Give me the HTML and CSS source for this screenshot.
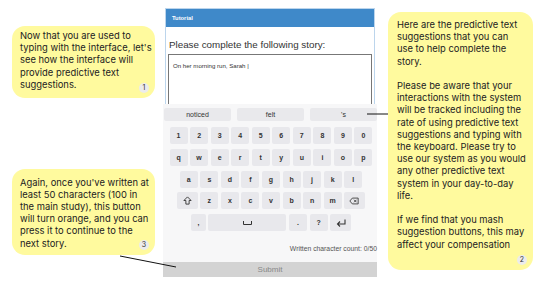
FILE: index.html
```html
<!DOCTYPE html>
<html>
<head>
  <meta charset="UTF-8">
  <title>Tutorial - predictive text</title>
  <link rel="stylesheet" href="styles.css">
</head>
<body>
  <div class="stage">
    <!-- Left column: callouts 1 and 3 -->
    <div class="side side-left">
      <div class="note note-1">
        Now that you are used to<br>
        typing with the interface, let's<br>
        see how the interface will<br>
        provide predictive text<br>
        suggestions.
        <span class="badge">1</span>
      </div>
      <div class="note note-3">
        Again, once you've written at<br>
        least 50 characters (100 in<br>
        the main study), this button<br>
        will turn orange, and you can<br>
        press it to continue to the<br>
        next story.
        <span class="badge">3</span>
      </div>
    </div>

    <!-- Middle column: the app -->
    <div class="app">
      <div class="panel">
        <div class="panel-head">Tutorial</div>
        <div class="panel-body">
          <div class="prompt">Please complete the following story:</div>
          <div class="story">On her morning run, Sarah |</div>
        </div>
      </div>
      <div class="keyboard">
        <div class="suggestions">
          <div class="suggestion">noticed</div>
          <div class="suggestion">felt</div>
          <div class="suggestion">'s</div>
        </div>
        <div class="key-row">
          <div class="key">1</div><div class="key">2</div><div class="key">3</div><div class="key">4</div><div class="key">5</div>
          <div class="key">6</div><div class="key">7</div><div class="key">8</div><div class="key">9</div><div class="key">0</div>
        </div>
        <div class="key-row">
          <div class="key">q</div><div class="key">w</div><div class="key">e</div><div class="key">r</div><div class="key">t</div>
          <div class="key">y</div><div class="key">u</div><div class="key">i</div><div class="key">o</div><div class="key">p</div>
        </div>
        <div class="key-row">
          <div class="key">a</div><div class="key">s</div><div class="key">d</div><div class="key">f</div><div class="key">g</div>
          <div class="key">h</div><div class="key">j</div><div class="key">k</div><div class="key">l</div>
        </div>
        <div class="key-row">
          <div class="key key-wide">
            <svg width="9" height="9" viewBox="0 0 10 10"><path d="M5 1 L9 5 H6.8 V9 H3.2 V5 H1 Z" fill="none" stroke="#333" stroke-width="1" stroke-linejoin="round"/></svg>
          </div>
          <div class="key">z</div><div class="key">x</div><div class="key">c</div><div class="key">v</div>
          <div class="key">b</div><div class="key">n</div><div class="key">m</div>
          <div class="key key-wide">
            <svg width="10" height="8" viewBox="0 0 12 9"><path d="M4 1 H11 V8 H4 L1 4.5 Z" fill="none" stroke="#333" stroke-width="1" stroke-linejoin="round"/><path d="M6 3 L9 6 M9 3 L6 6" stroke="#333" stroke-width="1"/></svg>
          </div>
        </div>
        <div class="key-row">
          <div class="key key-comma">,</div>
          <div class="key key-space">
            <svg width="9" height="4" viewBox="0 0 9 4"><path d="M0.5 0 V3.5 H8.5 V0" fill="none" stroke="#333" stroke-width="1"/></svg>
          </div>
          <div class="key">.</div>
          <div class="key">?</div>
          <div class="key key-enter">
            <svg width="10" height="8" viewBox="0 0 10 8"><path d="M9 0.5 V5 H1.5 M4 2.5 L1.5 5 L4 7.5" fill="none" stroke="#333" stroke-width="1.1"/></svg>
          </div>
        </div>
        <div class="char-count">Written character count: 0/50</div>
      </div>
      <div class="submit">Submit</div>
    </div>

    <!-- Right column: callout 2 -->
    <div class="side side-right">
      <div class="note note-2">
        <p>Here are the predictive text<br>
        suggestions that you can<br>
        use to help complete the<br>
        story.</p>
        <p>Please be aware that your<br>
        interactions with the system<br>
        will be tracked including the<br>
        rate of using predictive text<br>
        suggestions and typing with<br>
        the keyboard. Please try to<br>
        use our system as you would<br>
        any other predictive text<br>
        system in your day-to-day<br>
        life.</p>
        <p>If we find that you mash<br>
        suggestion buttons, this may<br>
        affect your compensation</p>
        <span class="badge">2</span>
      </div>
    </div>

    <!-- Leader lines from the callouts -->
    <svg class="leaders" width="543" height="283">
      <line x1="367" y1="114" x2="388" y2="114" stroke="#111" stroke-width="1"/>
      <line x1="120" y1="256" x2="176" y2="267" stroke="#111" stroke-width="1"/>
    </svg>
  </div>
</body>
</html>
```

FILE: styles.css
```css
body {
  margin: 0;
  background: #fff;
  font-family: "Liberation Sans", Arial, sans-serif;
  color: #333;
}
.stage {
  position: relative;
  width: 543px;
  height: 283px;
  display: flex;
  overflow: hidden;
}

/* callouts */
.side {
  display: flex;
  flex-direction: column;
}
.side-left {
  width: 143px;
  margin-left: 12px;
  margin-right: 8px;
}
.side-right {
  width: 145px;
  margin-left: 11px;
  padding-top: 12px;
}
.note {
  position: relative;
  box-sizing: border-box;
  background: #fffa9e;
  border-radius: 13px;
  font-family: Inter, "Noto Sans", sans-serif;
  font-size: 9.4px;
  line-height: 12.2px;
  color: #222;
  white-space: nowrap;
}
.note-1 {
  margin-top: 26px;
  height: 72px;
  padding: 4px 6px 0 8px;
}
.note-3 {
  margin-top: 71px;
  height: 86px;
  padding: 7.5px 6px 0 8px;
}
.note-2 {
  height: 258px;
  padding: 7px 6px 0 9px;
}
.note-2 p {
  margin: 0 0 12.2px 0;
}
.badge {
  position: absolute;
  right: 6px;
  bottom: 5px;
  width: 10px;
  height: 10px;
  border-radius: 50%;
  background: #ececec;
  font-size: 7px;
  line-height: 10px;
  text-align: center;
  color: #333;
}

/* app column */
.app {
  width: 214px;
  display: flex;
  flex-direction: column;
}
.panel {
  margin: 8px 2px 0 2px;
  height: 96px;
  box-sizing: border-box;
  border: 1px solid #bcd5ec;
  border-bottom: none;
  overflow: hidden;
}
.panel-head {
  height: 18px;
  background: #3f89c9;
  color: #fff;
  font-size: 5.8px;
  font-weight: bold;
  line-height: 18px;
  padding-left: 6px;
}
.panel-body {
  padding: 11px 2px 0 2px;
}
.prompt {
  font-size: 9.8px;
  line-height: 13px;
  color: #333;
  padding-left: 1px;
}
.story {
  margin-top: 3px;
  height: 60px;
  border: 1px solid #777;
  font-size: 6.1px;
  padding: 7px 4px;
  box-sizing: border-box;
  color: #333;
}

/* keyboard */
.keyboard {
  flex: 0 0 158px;
  background: #f7f7f8;
  padding-top: 4px;
  box-sizing: border-box;
}
.suggestions {
  display: flex;
  gap: 6px;
  padding-left: 1px;
  margin-bottom: 6px;
}
.suggestion {
  flex: 1;
  height: 13px;
  line-height: 13px;
  background: #e9e9ec;
  border-radius: 2px;
  text-align: center;
  font-size: 7px;
  color: #333;
}
.key-row {
  display: flex;
  justify-content: center;
  gap: 2.55px;
  margin-bottom: 4.75px;
  padding-left: 2px;
}
.key {
  width: 18px;
  height: 17px;
  background: #e8e8ec;
  border-radius: 2px;
  display: flex;
  align-items: center;
  justify-content: center;
  font-size: 7px;
  font-weight: bold;
  color: #333;
}
.key-wide {
  width: 20.5px;
}
.key-comma {
  width: 15px;
}
.key-space {
  width: 78px;
}
.key-enter {
  width: 21px;
}
.char-count {
  text-align: right;
  font-size: 6.8px;
  color: #555;
  margin-top: 14px;
}
.submit {
  height: 15px;
  background: #d3d3d3;
  color: #888;
  font-size: 8px;
  line-height: 15px;
  text-align: center;
}

.leaders {
  position: absolute;
  left: 0;
  top: 0;
  pointer-events: none;
}
```
